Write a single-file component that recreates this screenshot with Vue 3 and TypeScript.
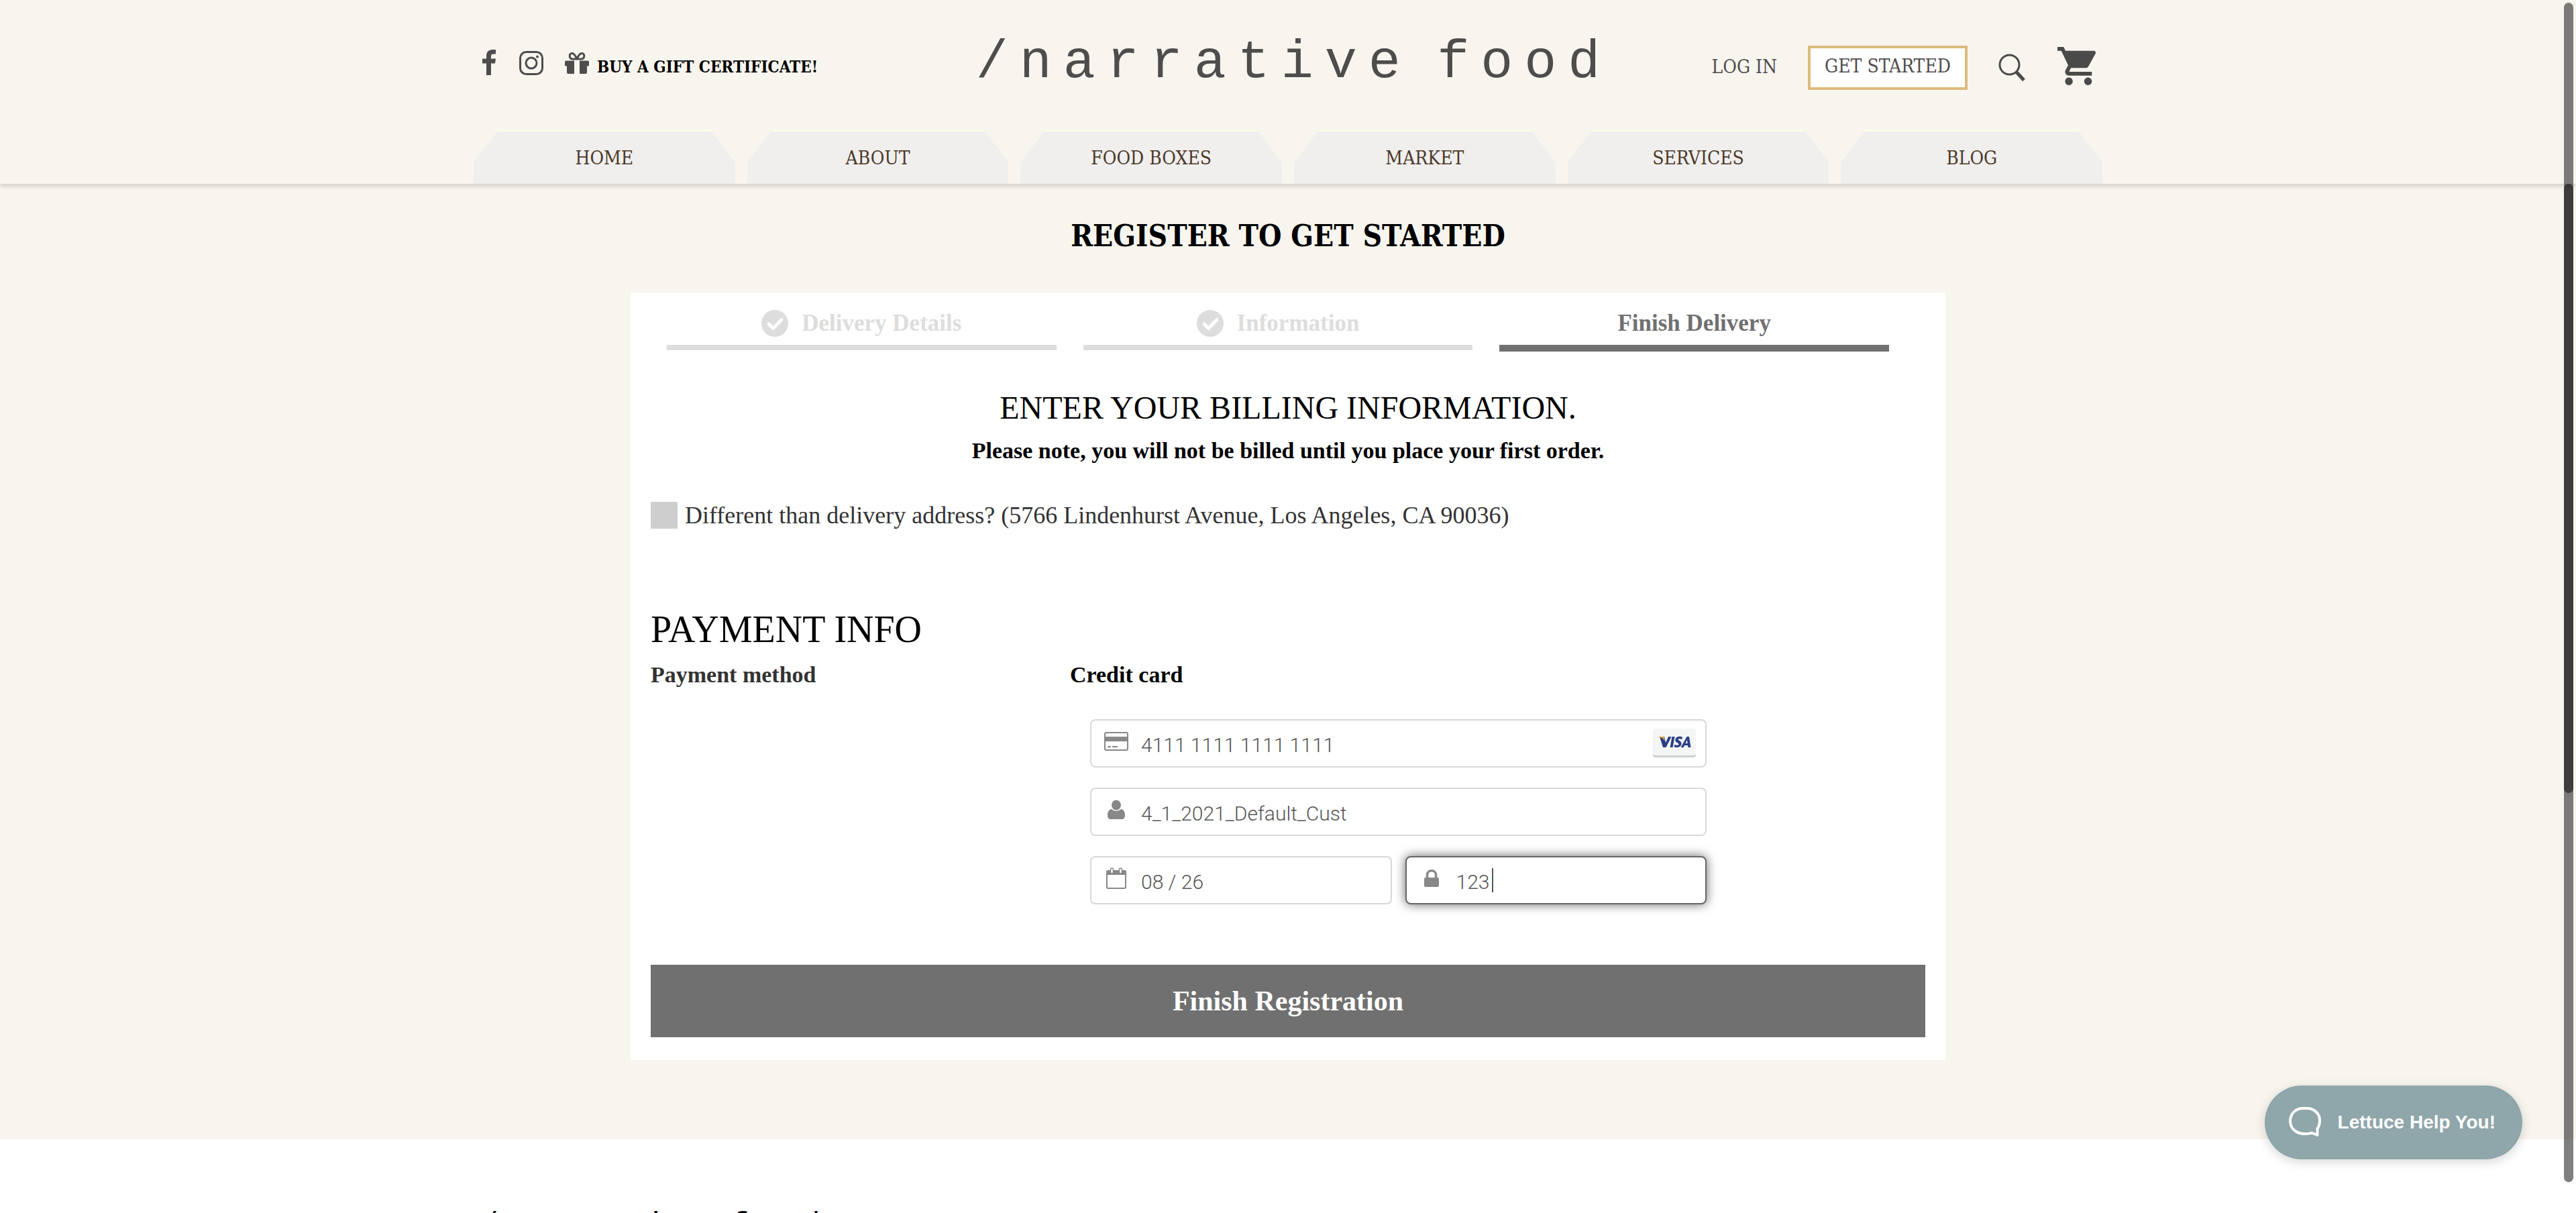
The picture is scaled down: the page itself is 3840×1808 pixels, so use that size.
<script setup lang="ts">
import { ref } from 'vue'

interface Step {
  label: string
  done: boolean
}

const navItems: string[] = ['HOME', 'ABOUT', 'FOOD BOXES', 'MARKET', 'SERVICES', 'BLOG']

const steps: Step[] = [
  { label: 'Delivery Details', done: true },
  { label: 'Information', done: true },
  { label: 'Finish Delivery', done: false },
]

const differentAddress = ref(false)
const cardNumber = ref('4111 1111 1111 1111')
const cardName = ref('4_1_2021_Default_Cust')
const expiry = ref('08 / 26')
const cvc = ref('123')
</script>

<template>
  <div class="page">
    <header class="header">
      <div class="container topbar">
        <div class="top-left">
          <a href="#" class="facebook" aria-label="Facebook">
            <svg width="20" height="38" viewBox="0 0 20 38"><path d="M6 38V20.500H0V13.500H6V9.500C6 3.500 9.500 0 15 0H20V6.500H16.500C14 6.500 13 7.500 13 9.800V13.500H20L19 20.500H13V38Z" fill="#4f4c4d" /></svg>
          </a>
          <a href="#" class="instagram" aria-label="Instagram">
            <svg width="36" height="36" viewBox="0 0 36 36" fill="none" stroke="#4f4c4d" stroke-width="3"><rect x="1.500" y="1.500" width="33" height="33" rx="9" /><circle cx="18" cy="18" r="8" /><circle cx="27" cy="8.500" r="2" fill="#4f4c4d" stroke="none" /></svg>
          </a>
          <a href="#" class="gift">
            <svg width="36" height="32" viewBox="0 0 36 32"><path d="M0 14a1.500 1.500 0 0 1 1.500-1.500H14V32H5a2 2 0 0 1-2-2V20.500H1a1 1 0 0 1-1-1ZM22 12.500H34.500A1.500 1.500 0 0 1 36 14v5.500a1 1 0 0 1-1 1H33V30a2 2 0 0 1-2 2H22Z" fill="#4f4c4d" /><path d="M18 10.500C16 5 14 1.500 10.500 1.500C6 1.500 6 9.500 11 10H18C20 5 22 1.500 25.500 1.500C30 1.500 30 9.500 25 10H18" fill="none" stroke="#4f4c4d" stroke-width="3" /></svg>
            <span>BUY A GIFT CERTIFICATE!</span>
          </a>
        </div>
        <a href="#" class="logo"><span>/narrative</span> <span>food</span></a>
        <div class="top-right">
          <a href="#" class="login">LOG IN</a>
          <a href="#" class="get-started">GET STARTED</a>
          <button type="button" class="icon-button search" aria-label="Search">
            <svg width="42" height="42" viewBox="0 0 42 42" fill="none" stroke="#4a4a4a"><circle cx="16.500" cy="16.500" r="14.500" stroke-width="3" /><path d="M26.500 27L38 39.500" stroke-width="5" /></svg>
          </button>
          <a href="#" class="cart" aria-label="Cart">
            <svg width="57" height="57" viewBox="1 2 20 20"><path fill="#4a4a4a" d="M7 18c-1.100 0-1.990.9-1.990 2S5.900 22 7 22s2-.9 2-2-.9-2-2-2zM1 2v2h2l3.600 7.590-1.350 2.450c-.16.28-.25.61-.25.96 0 1.100.9 2 2 2h12v-2H7.420c-.14 0-.25-.11-.25-.25l.03-.12.9-1.630h7.450c.75 0 1.410-.41 1.750-1.030l3.580-6.490A1 1 0 0 0 20 4H5.210l-.94-2H1zm16 16c-1.100 0-1.990.9-1.990 2s.89 2 1.990 2 2-.9 2-2-.9-2-2-2z" /></svg>
          </a>
        </div>
      </div>
      <nav class="container nav">
        <a v-for="item in navItems" :key="item" href="#" class="tab">{{ item }}</a>
      </nav>
    </header>

    <main class="main">
      <h1>REGISTER TO GET STARTED</h1>
      <form class="card" @submit.prevent>
        <ol class="steps">
          <li v-for="step in steps" :key="step.label" :class="{ active: !step.done }">
            <svg v-if="step.done" width="40" height="40" viewBox="0 0 40 40"><circle cx="20" cy="20" r="20" fill="#ddd" /><path d="M11 21L17.500 27.500L30 14.500" fill="none" stroke="#fff" stroke-width="5" stroke-linecap="round" stroke-linejoin="round" /></svg>
            <span>{{ step.label }}</span>
          </li>
        </ol>

        <h2>ENTER YOUR BILLING INFORMATION.</h2>
        <p class="note">Please note, you will not be billed until you place your first order.</p>

        <label class="address">
          <input v-model="differentAddress" type="checkbox" />
          <span>Different than delivery address? (5766 Lindenhurst Avenue, Los Angeles, CA 90036)</span>
        </label>

        <h3>PAYMENT INFO</h3>
        <div class="payment">
          <div class="method">Payment method</div>
          <div>
            <div class="method-value">Credit card</div>
            <div class="fields">
              <div class="field">
                <svg class="field-icon" width="36" height="36" viewBox="0 0 36 36"><rect x="1" y="5" width="34" height="26" rx="2" fill="none" stroke="#888" stroke-width="2" /><path d="M0 11H36V18H0ZM5 25h5v2H5ZM12 25h8v2H12Z" fill="#888" /></svg>
                <input v-model="cardNumber" type="text" aria-label="Card number" />
                <span class="visa" role="img" aria-label="Visa">
                  <svg width="64" height="44" viewBox="0 0 64 44">
                    <rect y="2" width="64" height="41" rx="4" fill="#cfd1d1" />
                    <rect width="64" height="40" rx="4" fill="#f4f6f6" />
                    <g transform="translate(8 11)" fill="#2a3f86">
                      <path d="M2 1H9L11 10L15 1H19.500L11.500 17H7Z" />
                      <path d="M20.500 1H24.500L21.500 17H17.500Z" />
                      <path d="M36 1.500L35.200 5C33 4 29.500 3.800 29.500 5.300C29.500 7 34.800 7.300 34.500 11.500C34.200 17 27.500 18 23.500 16.300L24.300 12.800C27 14.200 30.500 14 30.500 12.200C30.500 10.300 25 9.800 25.300 5.800C25.600 1 31.500 -.2 36 1.500Z" />
                      <path fill-rule="evenodd" d="M42.500 1H46L48.500 17H44.500L44 14H39L37.800 17H33.500ZM43 6L40.300 11H43.600Z" />
                      <path d="M0 1H7C9 1 9 3 9.500 7C7.500 3.500 4.500 2 0 1.500Z" fill="#e8a23c" />
                    </g>
                  </svg>
                </span>
              </div>
              <div class="field">
                <svg class="field-icon" width="36" height="36" viewBox="0 0 36 36" fill="#888"><ellipse cx="18" cy="11" rx="7" ry="7.500" /><path d="M11 17C9 17 5 19 5 26C5 30 7 32 9 32H27C29 32 31 30 31 26C31 19 27 17 25 17C21 20.500 15 20.500 11 17Z" /></svg>
                <input v-model="cardName" type="text" aria-label="Name on card" />
              </div>
              <div class="field-row">
                <div class="field">
                  <svg class="field-icon" width="36" height="36" viewBox="0 0 36 36"><rect x="4" y="7" width="28" height="26" rx="2" fill="none" stroke="#888" stroke-width="2" /><path d="M3 7H33V13H3Z" fill="#888" /><rect x="9.500" y="3" width="4" height="8" rx="2" fill="#fff" stroke="#888" stroke-width="1.500" /><rect x="22.500" y="3" width="4" height="8" rx="2" fill="#fff" stroke="#888" stroke-width="1.500" /></svg>
                  <input v-model="expiry" type="text" aria-label="Expiration date" />
                </div>
                <div class="field focused">
                  <svg class="field-icon" width="36" height="36" viewBox="0 0 36 36"><rect x="7" y="17" width="22" height="14" rx="2" fill="#888" /><path d="M11.500 18V13C11.500 4.500 24.500 4.500 24.500 13V18" fill="none" stroke="#888" stroke-width="3.500" /></svg>
                  <input v-model="cvc" type="text" aria-label="Security code" />
                  <span class="caret"></span>
                </div>
              </div>
            </div>
          </div>
        </div>

        <button type="submit" class="submit">Finish Registration</button>
      </form>
    </main>

    <footer class="footer">
      <div class="container">
        <a href="#" class="footer-logo"><span>/narrative</span> <span>food</span></a>
      </div>
    </footer>

    <button type="button" class="chat">
      <svg width="48" height="46" viewBox="0 0 48 46" fill="none" stroke="#fff" stroke-width="4" stroke-linejoin="round"><path d="M21 2H27C38 2 46 10 46 20C46 25 45 29 42.500 32V42L34 38.500C31 40 28 40 24 40C11 40 2 32 2 21C2 10 10 2 21 2Z" /></svg>
      <span>Lettuce Help You!</span>
    </button>
    <div class="scroll-outer"></div>
    <div class="scroll-inner"></div>
  </div>
</template>

<style>
body {
  margin: 0;
  background: #fff;
}
</style>

<style scoped>
* {
  box-sizing: border-box;
}

.page {
  position: relative;
  height: 100vh;
  overflow: hidden;
  font-family: "Liberation Serif", serif;
  color: #000;
}

a {
  color: inherit;
  text-decoration: none;
}

svg {
  display: block;
  flex: none;
}

.container {
  width: 100%;
  max-width: 2428px;
  margin: 0 auto;
}

.header {
  position: relative;
  background: #f8f5ee;
  box-shadow: 0 4px 6px rgba(0, 0, 0, 0.14);
  font-family: "DejaVu Serif Condensed", "DejaVu Serif", serif;
  font-size: 28px;
}

.topbar {
  display: grid;
  grid-template-columns: 1fr auto 1fr;
  align-items: center;
  height: 194px;
  padding: 8px 10px 0;
}

.top-left,
.gift {
  display: flex;
  align-items: flex-end;
}

.top-left {
  padding-left: 3px;
  padding-bottom: 16px;
}

.facebook {
  margin-right: 35px;
}

.instagram {
  margin-right: 32px;
}

.gift {
  gap: 12px;
  font-size: 24px;
  font-weight: 700;
  line-height: 24px;
}

.gift svg {
  margin-bottom: 2px;
}

.logo {
  padding: 0 0 16px 17px;
  font-family: "Liberation Mono", monospace;
  font-size: 34px;
  letter-spacing: 17px;
  color: #4f4c4d;
}

.logo span {
  font-size: 80px;
}

.top-right {
  display: flex;
  align-items: center;
  justify-content: flex-end;
  gap: 46px;
  color: #4f4c4d;
}

.login {
  padding-bottom: 4px;
}

.get-started {
  padding: 0 21px 4px;
  border: 4px solid #dcbc7c;
  background: #fff;
  line-height: 54px;
}

.cart {
  margin-bottom: 6px;
}

.icon-button {
  padding: 0;
  border: 0;
  background: none;
}

.nav {
  display: flex;
  gap: 18px;
}

.tab {
  flex: 1;
  height: 80px;
  border-top: 2px solid #fdfce6;
  background: #f0efee;
  clip-path: polygon(0 48px, 37px 0, calc(100% - 37px) 0, 100% 48px, 100% 100%, 0 100%);
  color: #4b3a29;
  line-height: 80px;
  text-align: center;
}

.main {
  padding: 50px 0 118px;
  background: #f8f5ee;
}

h1,
h2,
h3,
p {
  margin: 0;
}

h1 {
  margin-bottom: 56px;
  font-family: "DejaVu Serif Condensed", "DejaVu Serif", serif;
  font-size: 44px;
  line-height: 56px;
  text-align: center;
}

.card {
  width: 100%;
  max-width: 1960px;
  margin: 0 auto;
  padding: 26px 30px 34px;
  background: #fff;
}

.steps {
  display: flex;
  gap: 40px;
  height: 62px;
  margin: 0 54px 56px 24px;
  padding: 0;
  list-style: none;
  font-size: 35px;
  font-weight: 700;
  line-height: 40px;
}

.steps li {
  display: flex;
  flex: 1;
  justify-content: center;
  gap: 20px;
  height: 60px;
  border-bottom: 8px solid #ddd;
  color: #ddd;
}

.steps .active {
  height: 62px;
  border-bottom: 10px solid #707070;
  color: #707070;
}

h2 {
  margin-bottom: 14px;
  font-size: 48px;
  font-weight: 400;
  line-height: 56px;
  text-align: center;
}

.note {
  margin-bottom: 54px;
  font-size: 34px;
  font-weight: 700;
  line-height: 44px;
  text-align: center;
}

.address {
  display: flex;
  gap: 11px;
  color: #333;
  font-size: 36px;
  line-height: 40px;
}

.address input {
  flex: none;
  width: 40px;
  height: 40px;
  margin: 0;
  appearance: none;
  background: #cecece;
}

h3 {
  margin: 118px 0 14px;
  font-size: 56px;
  font-weight: 400;
  line-height: 64px;
}

.payment {
  display: grid;
  grid-template-columns: 625px 1fr;
  font-size: 34px;
  line-height: 44px;
}

.method {
  color: #333;
  font-weight: 700;
}

.method-value {
  font-weight: 700;
}

.fields {
  display: flex;
  flex-direction: column;
  gap: 30px;
  max-width: 949px;
  margin-top: 44px;
  padding-left: 30px;
}

.field-row {
  display: grid;
  grid-template-columns: minmax(0, 1fr) minmax(0, 1fr);
  gap: 20px;
}

.field {
  position: relative;
  display: flex;
  align-items: center;
  gap: 19px;
  height: 72px;
  padding: 0 14px 0 19px;
  border: 2px solid #d8d8d8;
  border-radius: 8px;
  background: #fff;
}

.field-icon {
  margin-bottom: 6px;
}

.field input {
  flex: 1;
  min-width: 0;
  height: 68px;
  padding: 4px 0 0;
  border: 0;
  outline: 0;
  background: none;
  color: #555;
  font-family: Roboto, "Liberation Sans", sans-serif;
  font-size: 30px;
  font-weight: 300;
}

.focused {
  border-color: #666;
  box-shadow: 0 0 16px rgba(0, 0, 0, 0.6);
}

.caret {
  position: absolute;
  top: 16px;
  left: 127px;
  width: 2px;
  height: 36px;
  background: #555;
}

.submit {
  display: block;
  width: 100%;
  height: 108px;
  margin-top: 90px;
  border: 0;
  background: #707070;
  color: #fff;
  font-family: "Liberation Serif", serif;
  font-size: 42px;
  font-weight: 700;
}

.footer {
  padding-top: 102px;
  background: #fff;
}

.footer-logo {
  display: block;
  padding-left: 10px;
  font-family: "Liberation Mono", monospace;
  font-size: 18px;
  letter-spacing: 9px;
}

.footer-logo span {
  font-size: 44px;
}

.chat {
  position: absolute;
  right: 80px;
  bottom: 80px;
  display: flex;
  align-items: center;
  gap: 25px;
  height: 110px;
  padding: 0 40px 0 36px;
  border: 0;
  border-radius: 55px;
  background: #8fa6aa;
  box-shadow: 0 4px 16px rgba(0, 0, 0, 0.16);
  color: #fff;
  font-family: "Liberation Sans", sans-serif;
  font-size: 28px;
  font-weight: 700;
}

.scroll-outer,
.scroll-inner {
  position: absolute;
  right: 4px;
  width: 14px;
  border-radius: 7px;
  background: rgba(0, 0, 0, 0.5);
}

.scroll-outer {
  top: 4px;
  bottom: 46px;
}

.scroll-inner {
  top: 274px;
  height: 908px;
}
</style>
